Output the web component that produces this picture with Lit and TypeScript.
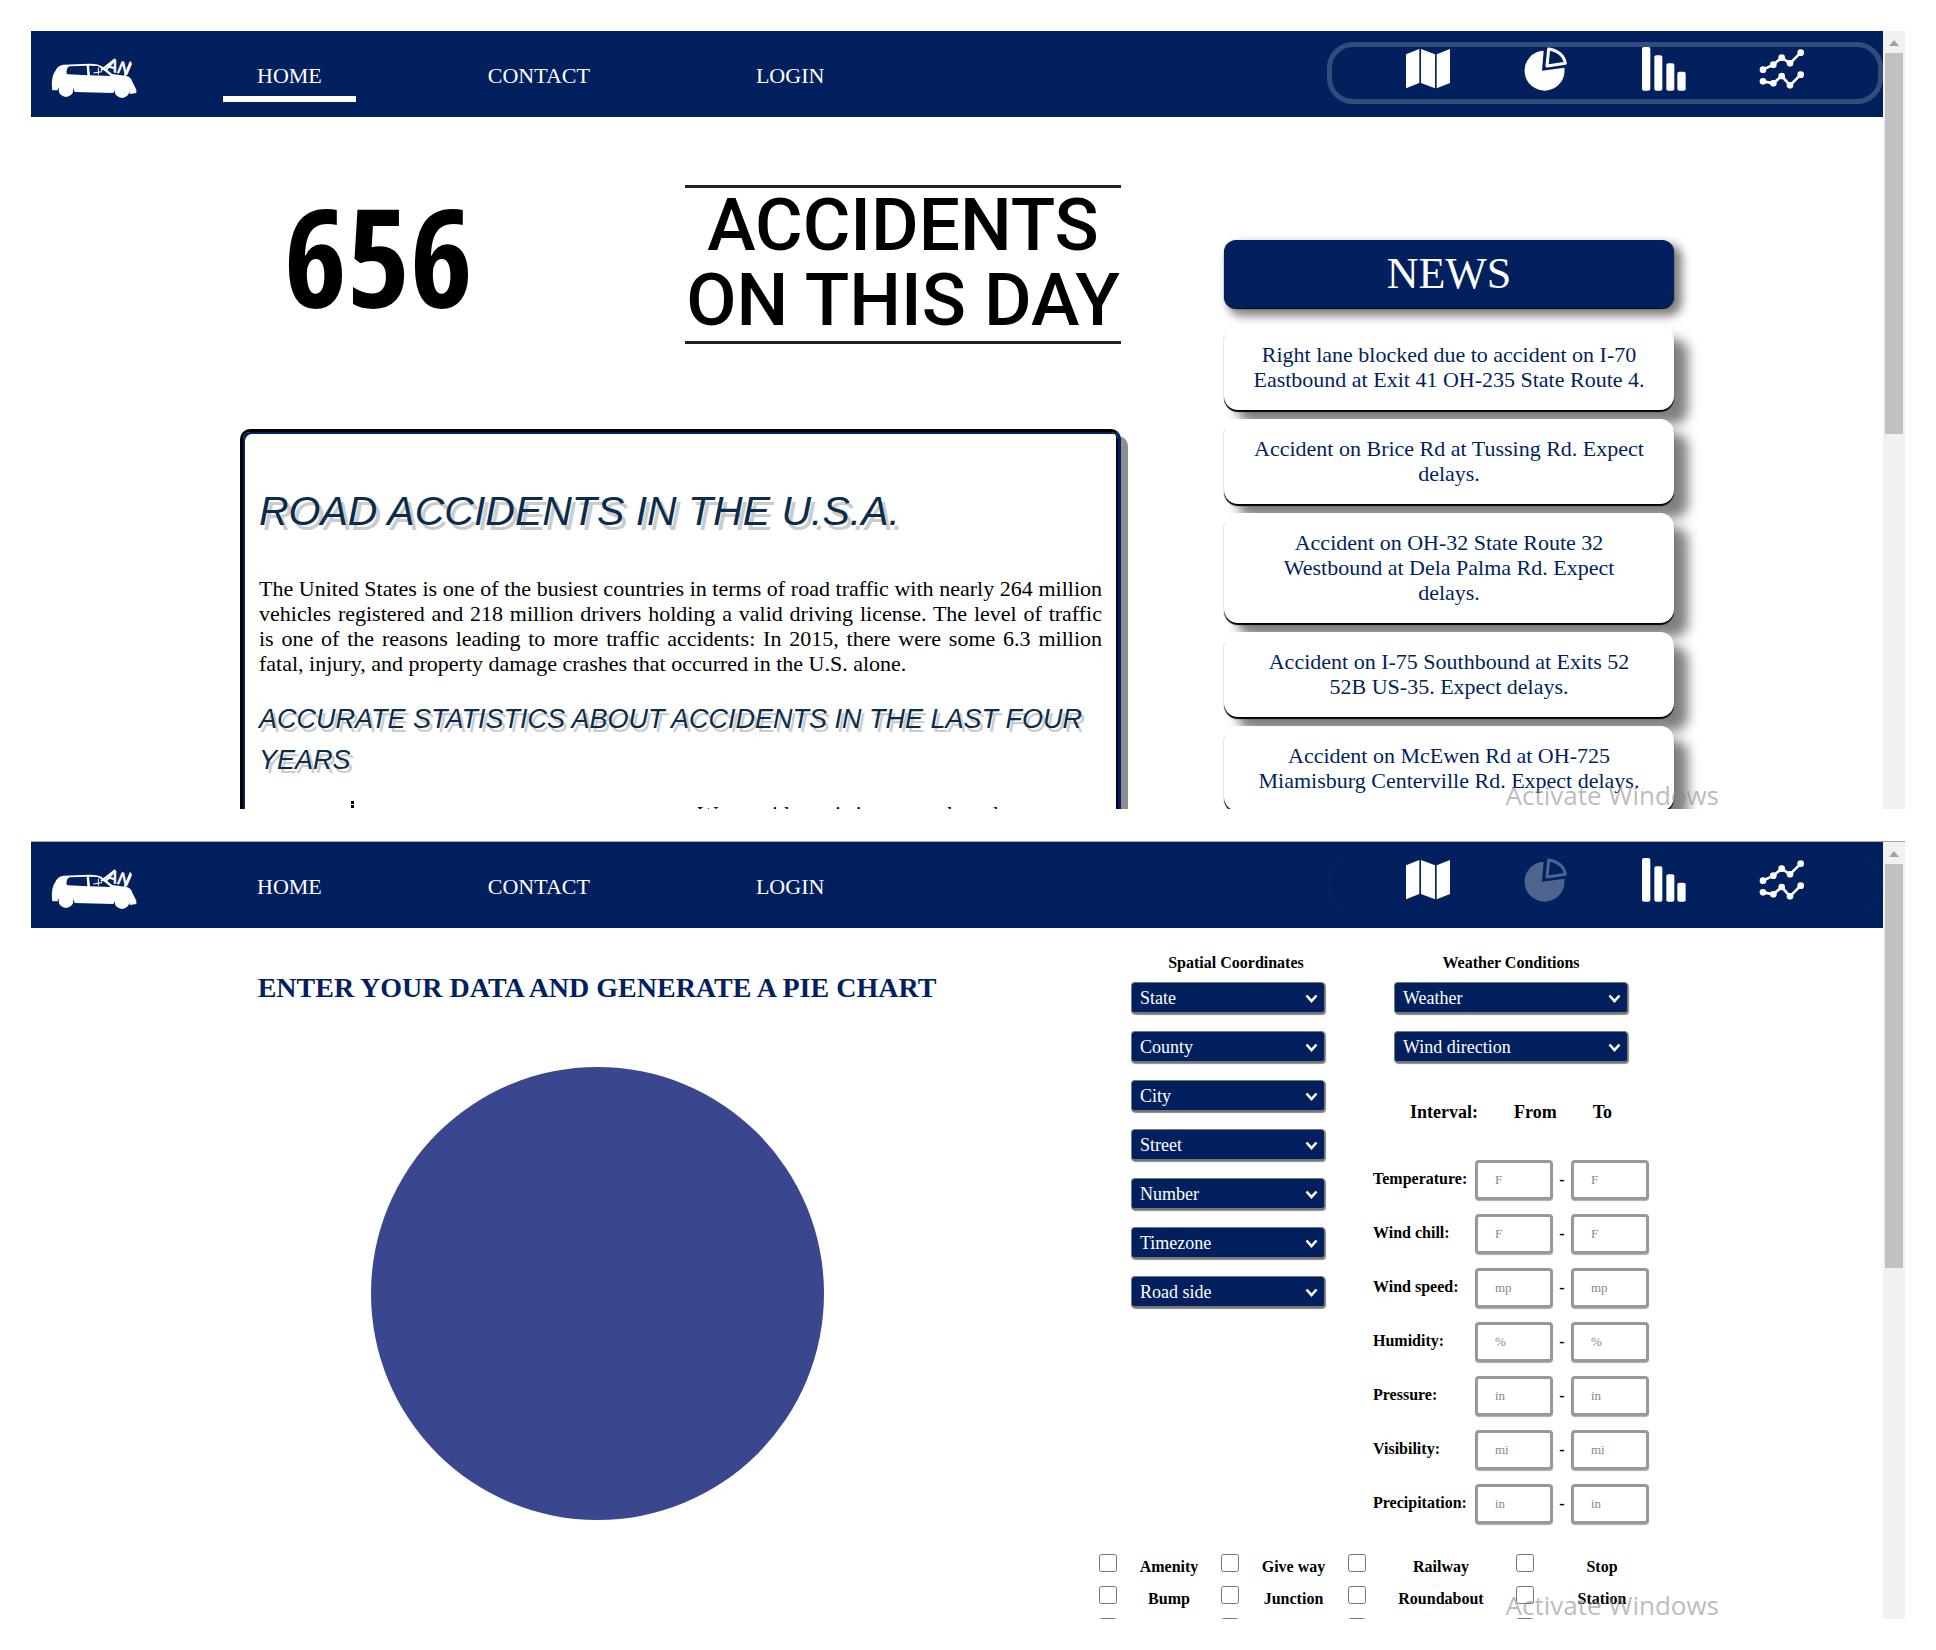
import { LitElement, html, css, svg } from "lit";
import { customElement, property } from "lit/decorators.js";
import { classMap } from "lit/directives/class-map.js";

const NAVY = css`#021f5e`;

const icons = {
  map: svg`<path d="M0 22 40 6V108L0 124ZM45 6 87 22V124L45 108ZM92 22 132 6V108L92 124Z" fill="#fff"/>`,
  pie: svg`<path d="M59 11A60 60 0 1 0 121 62L54 71Z" fill="#fff"/>
    <path d="M74 6Q118 14 124 49L69 57Z" fill="none" stroke="#fff" stroke-width="9" stroke-linejoin="round"/>`,
  bars: svg`<g fill="#fff"><rect width="25" height="131" rx="6"/><rect x="37" y="25" width="24" height="106" rx="6"/>
    <rect x="73" y="49" width="24" height="82" rx="6"/><rect x="106" y="74" width="25" height="57" rx="6"/></g>`,
  lines: svg`<g fill="none" stroke="#fff" stroke-width="8"><path d="M9 68 40 53 65 32 90 49 122 17"/><path d="M9 103 40 109 65 87 90 115 122 83"/></g>
    <g fill="#fff"><circle cx="9" cy="68" r="10"/><circle cx="40" cy="53" r="10"/><circle cx="65" cy="32" r="10"/><circle cx="90" cy="49" r="10"/><circle cx="122" cy="17" r="10"/>
    <circle cx="9" cy="103" r="10"/><circle cx="40" cy="109" r="10"/><circle cx="65" cy="87" r="10"/><circle cx="90" cy="115" r="10"/><circle cx="122" cy="83" r="10"/></g>`,
};

type ToolName = keyof typeof icons;
const TOOLS: { name: ToolName; label: string }[] = [
  { name: "map", label: "Map" },
  { name: "pie", label: "Pie chart" },
  { name: "bars", label: "Bar chart" },
  { name: "lines", label: "Line chart" },
];

@customElement("site-header")
class SiteHeader extends LitElement {
  @property() page = "";
  @property() tool = "";

  static styles = css`
    :host { display: block; background: ${NAVY}; }
    .bar { display: flex; align-items: flex-start; height: 86px; padding-left: 20px; }
    .logo { display: block; margin-top: 26px; margin-right: 86px; }
    .logo svg { display: block; width: 86px; height: 42px; overflow: visible; }
    nav { display: flex; gap: 98px; flex: 1; }
    .link { color: #fff; text-decoration: none; font-size: 22px; line-height: 26px;
      padding: 32px 34px 7px; border-bottom: 6px solid transparent; }
    .link.current { border-bottom-color: #fff; }
    .tools { display: flex; gap: 74px; box-sizing: border-box; height: 62px; margin-top: 11px;
      padding: 0 74px; border: 5px solid rgba(255, 255, 255, 0.2); border-radius: 26px; }
    .tools.quiet { border-color: rgba(255, 255, 255, 0.01); }
    .tool svg { display: block; width: 44px; height: 44px; overflow: visible; }
    .tool.current { opacity: 0.3; }
  `;

  render() {
    return html`<header class="bar">
      <a class="logo" href="#" aria-label="Start page">
        <svg viewBox="63 50 258 126">
          <path fill="#fff" d="M66 146Q63 108 76 92 82 76 100 73L178 70Q206 70 220 80L247 101 290 107Q303 110 307 124L319 148V158L300 161A26 26 0 0 0 250 158L134 155A27 27 0 0 0 82 150L68 150Z"/>
          <circle cx="108" cy="148" r="22" fill="#fff"/><circle cx="276" cy="151" r="22" fill="#fff"/>
          <path fill="#021f5e" d="M110 100Q108 80 120 78L170 76 172 105 114 102ZM177 76 203 77Q226 92 242 107L180 105Z"/>
          <path stroke="#fff" stroke-width="3" fill="none" d="M190 98 216 94M205 82V103"/>
          <path stroke="#fff" stroke-width="6" fill="none" d="M213 90 256 56M284 108 302 64"/>
          <text x="226" y="90" transform="rotate(12 226 90)" font-family="Liberation Sans, sans-serif" font-style="italic" font-size="52" stroke="#fff" stroke-width="2" fill="#fff">AN</text>
        </svg>
      </a>
      <nav>
        ${["HOME", "CONTACT", "LOGIN"].map(
          (t) => html`<a class=${classMap({ link: true, current: t === this.page })} href="#${t.toLowerCase()}">${t}</a>`
        )}
      </nav>
      <div class=${classMap({ tools: true, quiet: this.tool !== "" })}>
        ${TOOLS.map(
          (t) => html`<a class=${classMap({ tool: true, current: t.name === this.tool })} href="#${t.name}" aria-label=${t.label}>
            <svg viewBox="0 0 132 132">${icons[t.name]}</svg></a>`
        )}
      </div>
    </header>`;
  }
}

@customElement("scroll-pane")
class ScrollPane extends LitElement {
  @property({ type: Number }) thumb = 50;

  static styles = css`
    :host { display: grid; grid-template-columns: minmax(0, 1fr) 22px; position: relative; overflow: hidden; min-height: 0; }
    .view { overflow: hidden; min-height: 0; }
    .track { background: #f1f1f1; display: flex; flex-direction: column; padding: 0 2px; min-height: 0; }
    .arrow { display: block; width: 18px; height: 22px; flex: none; }
    .thumb { background: #c1c1c1; }
    .mark { position: absolute; right: 186px; bottom: 0; font: 26px/28px "Open Sans", "Noto Sans", sans-serif;
      color: rgba(130, 130, 130, 0.55); pointer-events: none; }
  `;

  render() {
    return html`<div class="view"><slot></slot></div>
      <div class="track">
        <svg class="arrow" viewBox="0 0 18 22"><path d="M9 9 14 15H4Z" fill="#a3a3a3"/></svg>
        <div class="thumb" style="height:${this.thumb}%"></div>
      </div>
      <div class="mark">Activate Windows</div>`;
  }
}

const NEWS = [
  "Right lane blocked due to accident on I-70 Eastbound at Exit 41 OH-235 State Route 4.",
  "Accident on Brice Rd at Tussing Rd. Expect delays.",
  "Accident on OH-32 State Route 32 Westbound at Dela Palma Rd. Expect delays.",
  "Accident on I-75 Southbound at Exits 52 52B US-35. Expect delays.",
  "Accident on McEwen Rd at OH-725 Miamisburg Centerville Rd. Expect delays.",
];

@customElement("home-page")
class HomePage extends LitElement {
  static styles = css`
    :host { display: block; }
    .page { display: grid; grid-template-columns: 881fr 450fr; gap: 103px; padding: 68px 209px 0; }
    h1, h2, p { margin: 0; }
    .hero { display: flex; justify-content: space-between; align-items: flex-start; padding-left: 44px; margin-bottom: 85px; color: #000; }
    .count { font: 700 136px/142px "Open Sans Condensed", "Liberation Sans Narrow", Roboto, sans-serif; }
    .caption { width: 436px; box-sizing: border-box; border: solid #222; border-width: 3px 0; padding-bottom: 3px;
      font: 500 73px/75px Roboto, sans-serif; text-align: center; white-space: nowrap; }
    .card { border: 3px solid; border-color: #000 ${NAVY} ${NAVY} #000; border-radius: 10px; padding: 51px 16px 15px; background: #fff;
      box-shadow: inset 2px 2px 0 ${NAVY}, inset -2px -2px 0 #00030d, 7px 7px 0 #8e8e8e; }
    h1, h2 { font-family: "Liberation Sans", sans-serif; font-style: italic; font-weight: 400; color: #0b2c4a; }
    h1 { font-size: 41px; line-height: 56px; text-shadow: 4px 5px 0 #ccc; margin-bottom: 37px; }
    h2 { font-size: 27px; line-height: 41px; text-shadow: 3px 4px 0 #ccc; margin: 23px 0 20px; }
    .text { font-size: 22px; line-height: 25px; text-align: justify; }
    .more { display: grid; grid-template-columns: 1fr 1fr; }
    .more svg { display: block; margin-left: 92px; }
    .more .text { padding-left: 17px; }
    aside { padding-top: 55px; }
    .title { background: ${NAVY}; color: #fff; font-size: 44px; line-height: 68px; font-weight: 400; font-style: normal; font-family: inherit;
      text-align: center; border-radius: 12px; text-shadow: none; margin: 0 0 17px; box-shadow: 0 1px 1px #000, 6px 6px 10px 2px rgba(0, 0, 0, 0.5); }
    .list { list-style: none; margin: 0; padding: 0; display: flex; flex-direction: column; gap: 9px; }
    .item { background: #fff; color: ${NAVY}; text-align: center; font-size: 22px; line-height: 25px; padding: 17px 28px 18px;
      border-radius: 14px; box-shadow: 0 2px 1px #000, 14px 14px 12px rgba(0, 0, 0, 0.5); }
  `;

  render() {
    return html`<div class="page">
      <main>
        <div class="hero">
          <div class="count">656</div>
          <div class="caption">ACCIDENTS<br />ON THIS DAY</div>
        </div>
        <article class="card">
          <h1>ROAD ACCIDENTS IN THE U.S.A.</h1>
          <p class="text">The United States is one of the busiest countries in terms of road traffic with nearly 264 million
            vehicles registered and 218 million drivers holding a valid driving license. The level of traffic is one of the
            reasons leading to more traffic accidents: In 2015, there were some 6.3 million fatal, injury, and property
            damage crashes that occurred in the U.S. alone.</p>
          <h2>ACCURATE STATISTICS ABOUT ACCIDENTS IN THE LAST FOUR YEARS</h2>
          <div class="more">
            <svg width="3" height="20" viewBox="0 0 3 20"><path d="M1.5 0V20" stroke="#000" stroke-width="3" stroke-dasharray="3 1"/></svg>
            <p class="text">We provide statistics on roads and</p>
          </div>
        </article>
      </main>
      <aside>
        <h2 class="title">NEWS</h2>
        <ul class="list">${NEWS.map((n) => html`<li class="item">${n}</li>`)}</ul>
      </aside>
    </div>`;
  }
}

const PLACES = ["State", "County", "City", "Street", "Number", "Timezone", "Road side"];
const WEATHER = ["Weather", "Wind direction"];
const RANGES = [
  ["Temperature", "F"],
  ["Wind chill", "F"],
  ["Wind speed", "mph"],
  ["Humidity", "%"],
  ["Pressure", "in"],
  ["Visibility", "mi"],
  ["Precipitation", "in"],
];
const FEATURES = ["Amenity", "Give way", "Railway", "Stop", "Bump", "Junction", "Roundabout", "Station",
  "Crossing", "No exit", "Traffic calming", "Signal"];

@customElement("pie-page")
class PiePage extends LitElement {
  static styles = css`
    :host { display: block; }
    .page { display: grid; grid-template-columns: minmax(0, 1fr) 571px; padding: 0 213px 0 64px; }
    h1, h2 { margin: 0; }
    .chart { display: flex; flex-direction: column; align-items: center; padding-top: 43px; gap: 62px; }
    h1 { color: ${NAVY}; font-size: 28px; line-height: 34px; white-space: nowrap; }
    .pie { display: block; width: 453px; height: 453px; }
    form { padding-top: 23px; }
    .fields { display: grid; grid-template-columns: 194px 276px; column-gap: 48px; padding-left: 32px; align-items: start; }
    h2 { font-size: 16px; line-height: 24px; text-align: center; }
    .places h2 { padding-left: 16px; }
    .group { display: grid; gap: 17px; padding-top: 7px; }
    .weather .group { padding: 7px 21px 0; }
    .pick { display: grid; align-items: center; }
    .pick > * { grid-area: 1 / 1; }
    .pick svg { justify-self: end; margin-right: 7px; width: 13px; height: 9px; pointer-events: none; }
    select { appearance: none; width: 100%; height: 32px; margin: 0; padding: 0 8px; font: 18px "Liberation Serif", serif; color: #fff;
      background: ${NAVY}; border: 1px solid #777; border-bottom-width: 2px; border-radius: 4px; box-shadow: 1px 1px 1px #888; }
    .heads { display: flex; justify-content: center; gap: 36px; font-weight: 700; font-size: 18px; line-height: 24px; margin: 37px 0 36px; }
    .ranges { display: grid; gap: 14px; }
    .range { display: grid; grid-template-columns: 102px 78px 18px 78px; font-weight: 700; font-size: 16px; }
    .range label { line-height: 38px; white-space: nowrap; }
    .dash { text-align: center; line-height: 40px; }
    .box { box-sizing: border-box; width: 78px; height: 40px; margin: 0; padding: 0 38px 0 17px; font: 13px "Liberation Serif", serif;
      border: 3px solid #999; border-radius: 4px; box-shadow: 0 1px 1px #aaa; }
    .box::placeholder { color: #888; }
    .flags { display: grid; grid-template-columns: 122px 127px 168px 154px; margin-top: 30px; row-gap: 8px; }
    .flag { display: grid; grid-template-columns: 18px 1fr; font-weight: 700; font-size: 16px; line-height: 23px; text-align: center; }
    .flag input { width: 18px; height: 18px; margin: 0; }
    .flag span { padding-top: 1px; }
  `;

  private pick(name: string) {
    return html`<div class="pick">
      <select aria-label=${name}><option>${name}</option></select>
      <svg viewBox="0 0 13 9"><path d="M1.5 1.5 6.5 7 11.5 1.5" fill="none" stroke="#fff" stroke-width="2.6"/></svg>
    </div>`;
  }

  render() {
    return html`<div class="page">
      <section class="chart">
        <h1>ENTER YOUR DATA AND GENERATE A PIE CHART</h1>
        <svg class="pie" viewBox="0 0 100 100"><circle cx="50" cy="50" r="50" fill="#3a478f"/></svg>
      </section>
      <form>
        <div class="fields">
          <section class="places">
            <h2>Spatial Coordinates</h2>
            <div class="group">${PLACES.map((p) => this.pick(p))}</div>
          </section>
          <section class="weather">
            <h2>Weather Conditions</h2>
            <div class="group">${WEATHER.map((p) => this.pick(p))}</div>
            <div class="heads"><span>Interval:</span><span>From</span><span>To</span></div>
            <div class="ranges">
              ${RANGES.map(
                ([name, unit], i) => html`<div class="range">
                  <label for="from-${i}">${name}:</label>
                  <input class="box" id="from-${i}" placeholder=${unit} />
                  <span class="dash">-</span>
                  <input class="box" aria-label="${name} to" placeholder=${unit} />
                </div>`
              )}
            </div>
          </section>
        </div>
        <div class="flags">
          ${FEATURES.map((f) => html`<label class="flag"><input type="checkbox" /><span>${f}</span></label>`)}
        </div>
      </form>
    </div>`;
  }
}

@customElement("app-root")
class AppRoot extends LitElement {
  static styles = css`
    :host { display: block; background: #fff; font-family: "Liberation Serif", "Times New Roman", serif; color: #000; }
    .screens { box-sizing: border-box; height: 100vh; display: grid; grid-template-rows: minmax(0, 1fr) minmax(0, 1fr);
      gap: 32px; padding: 31px; }
    .second { border-top: 1px solid #a9a5a8; }
  `;

  render() {
    return html`<div class="screens">
      <scroll-pane .thumb=${49}>
        <site-header page="HOME"></site-header>
        <home-page></home-page>
      </scroll-pane>
      <scroll-pane class="second" .thumb=${52}>
        <site-header tool="pie"></site-header>
        <pie-page></pie-page>
      </scroll-pane>
    </div>`;
  }
}
